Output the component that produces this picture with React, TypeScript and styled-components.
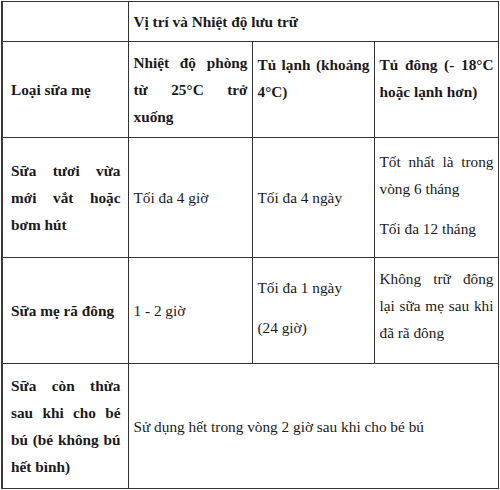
import React from "react";
import styled, { createGlobalStyle } from "styled-components";

const Global = createGlobalStyle`
  html, body { margin: 0; padding: 0; background: #ffffff; }
  body { font-family: "Liberation Serif", "Times New Roman", serif; color: #1a1a1a; }
`;

const Page = styled.div`
  width: 500px;
  height: 490px;
  padding: 1px 0 0 1px;
  box-sizing: border-box;
`;

const Table = styled.table`
  border-collapse: collapse;
  table-layout: fixed;
  width: 496px;
  border-left: 2px solid #3a3a3a;
  border-top: 1px solid #2a2a2a;
  border-right: 1px solid #2a2a2a;
  border-bottom: 1px solid #2a2a2a;
`;

const Row = styled.tr<{ $h: number }>`
  height: ${(p) => p.$h}px;
`;

const Cell = styled.td<{ $bold?: boolean; $bottom?: number; $side?: number }>`
  border: 1px solid #333333;
  padding: 0 ${(p) => (p.$side ?? 5) - 1}px ${(p) => p.$bottom ?? 0}px ${(p) => p.$side ?? 5}px;
  vertical-align: middle;
  font-size: 15.3px;
  line-height: 27px;
  font-weight: ${(p) => (p.$bold ? 700 : 400)};
  text-align: justify;
  text-align-last: left;
  box-sizing: border-box;
`;

const Para = styled.p<{ $gap?: number }>`
  margin: 0;
  & + & {
    margin-top: ${(p) => p.$gap ?? 10}px;
  }
`;

export default function App() {
  return (
    <Page>
      <Global />
      <Table>
        <colgroup>
          <col style={{ width: 126 }} />
          <col style={{ width: 124 }} />
          <col style={{ width: 122 }} />
          <col style={{ width: 124 }} />
        </colgroup>
        <tbody>
          <Row $h={40}>
            <Cell $side={8} />
            <Cell colSpan={3} $bold>
              Vị trí và Nhiệt độ lưu trữ
            </Cell>
          </Row>
          <Row $h={96}>
            <Cell $bold $side={8}>Loại sữa mẹ</Cell>
            <Cell $bold>Nhiệt độ phòng từ 25°C trở xuống</Cell>
            <Cell $bold $bottom={24}>
              Tủ lạnh (khoảng 4°C)
            </Cell>
            <Cell $bold $bottom={24}>
              Tủ đông (- 18°C hoặc lạnh hơn)
            </Cell>
          </Row>
          <Row $h={120}>
            <Cell $bold $side={8}>Sữa tươi vừa mới vắt hoặc bơm hút</Cell>
            <Cell>Tối đa 4 giờ</Cell>
            <Cell>Tối đa 4 ngày</Cell>
            <Cell $bottom={6}>
              <Para $gap={10}>Tốt nhất là trong vòng 6 tháng</Para>
              <Para $gap={10}>Tối đa 12 tháng</Para>
            </Cell>
          </Row>
          <Row $h={106}>
            <Cell $bold $side={8}>Sữa mẹ rã đông</Cell>
            <Cell>1 - 2 giờ</Cell>
            <Cell $bottom={6}>
              <Para $gap={13}>Tối đa 1 ngày</Para>
              <Para $gap={13}>(24 giờ)</Para>
            </Cell>
            <Cell $bottom={10}>Không trữ đông lại sữa mẹ sau khi đã rã đông</Cell>
          </Row>
          <Row $h={125}>
            <Cell $bold $side={8}>Sữa còn thừa sau khi cho bé bú (bé không bú hết bình)</Cell>
            <Cell colSpan={3}>Sử dụng hết trong vòng 2 giờ sau khi cho bé bú</Cell>
          </Row>
        </tbody>
      </Table>
    </Page>
  );
}
